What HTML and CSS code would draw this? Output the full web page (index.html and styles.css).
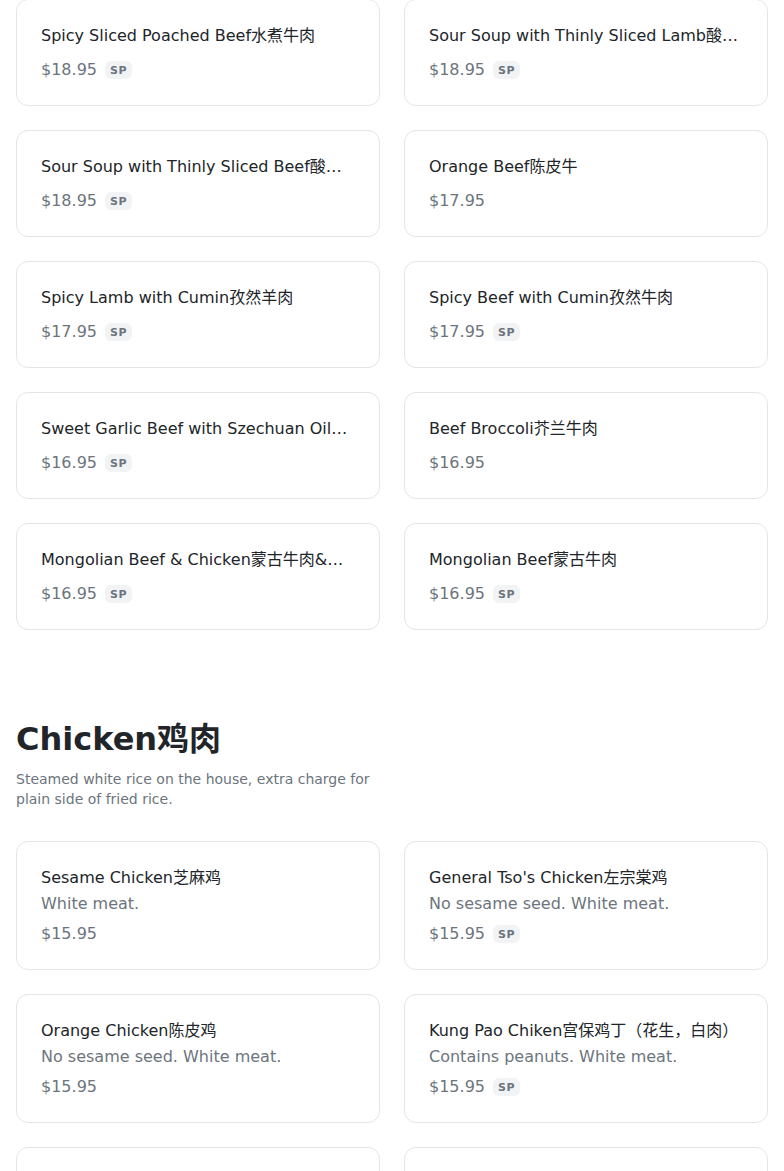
FILE: index.html
```html
<!DOCTYPE html>
<html lang="en">
<head>
<meta charset="utf-8">
<title>Menu</title>
<link rel="stylesheet" href="styles.css">
</head>
<body>
<main class="menu">
  <section class="category category-first">
    <div class="item-grid">
      <article class="item">
        <h3 class="item-name">Spicy Sliced Poached Beef水煮牛肉</h3>
        <div class="item-price-row"><span class="item-price">$18.95</span><span class="badge">SP</span></div>
      </article>
      <article class="item">
        <h3 class="item-name">Sour Soup with Thinly Sliced Lamb酸汤肥羊</h3>
        <div class="item-price-row"><span class="item-price">$18.95</span><span class="badge">SP</span></div>
      </article>
      <article class="item">
        <h3 class="item-name">Sour Soup with Thinly Sliced Beef酸汤肥牛</h3>
        <div class="item-price-row"><span class="item-price">$18.95</span><span class="badge">SP</span></div>
      </article>
      <article class="item">
        <h3 class="item-name">Orange Beef陈皮牛</h3>
        <div class="item-price-row"><span class="item-price">$17.95</span></div>
      </article>
      <article class="item">
        <h3 class="item-name">Spicy Lamb with Cumin孜然羊肉</h3>
        <div class="item-price-row"><span class="item-price">$17.95</span><span class="badge">SP</span></div>
      </article>
      <article class="item">
        <h3 class="item-name">Spicy Beef with Cumin孜然牛肉</h3>
        <div class="item-price-row"><span class="item-price">$17.95</span><span class="badge">SP</span></div>
      </article>
      <article class="item">
        <h3 class="item-name">Sweet Garlic Beef with Szechuan Oil红油蒜香牛肉</h3>
        <div class="item-price-row"><span class="item-price">$16.95</span><span class="badge">SP</span></div>
      </article>
      <article class="item">
        <h3 class="item-name">Beef Broccoli芥兰牛肉</h3>
        <div class="item-price-row"><span class="item-price">$16.95</span></div>
      </article>
      <article class="item">
        <h3 class="item-name">Mongolian Beef &amp; Chicken蒙古牛肉&amp;鸡肉</h3>
        <div class="item-price-row"><span class="item-price">$16.95</span><span class="badge">SP</span></div>
      </article>
      <article class="item">
        <h3 class="item-name">Mongolian Beef蒙古牛肉</h3>
        <div class="item-price-row"><span class="item-price">$16.95</span><span class="badge">SP</span></div>
      </article>
    </div>
  </section>

  <section class="category">
    <header class="category-header">
      <h2 class="category-title">Chicken鸡肉</h2>
      <p class="category-desc">Steamed white rice on the house, extra charge for plain side of fried rice.</p>
    </header>
    <div class="item-grid">
      <article class="item">
        <h3 class="item-name">Sesame Chicken芝麻鸡</h3>
        <p class="item-desc">White meat.</p>
        <div class="item-price-row"><span class="item-price">$15.95</span></div>
      </article>
      <article class="item">
        <h3 class="item-name">General Tso's Chicken左宗棠鸡</h3>
        <p class="item-desc">No sesame seed. White meat.</p>
        <div class="item-price-row"><span class="item-price">$15.95</span><span class="badge">SP</span></div>
      </article>
      <article class="item">
        <h3 class="item-name">Orange Chicken陈皮鸡</h3>
        <p class="item-desc">No sesame seed. White meat.</p>
        <div class="item-price-row"><span class="item-price">$15.95</span></div>
      </article>
      <article class="item">
        <h3 class="item-name">Kung Pao Chiken宫保鸡丁（花生，白肉）</h3>
        <p class="item-desc">Contains peanuts. White meat.</p>
        <div class="item-price-row"><span class="item-price">$15.95</span><span class="badge">SP</span></div>
      </article>
      <article class="item">
        <h3 class="item-name">&nbsp;</h3>
        <p class="item-desc">&nbsp;</p>
        <div class="item-price-row"><span class="item-price">&nbsp;</span></div>
      </article>
      <article class="item">
        <h3 class="item-name">&nbsp;</h3>
        <p class="item-desc">&nbsp;</p>
        <div class="item-price-row"><span class="item-price">&nbsp;</span></div>
      </article>
    </div>
  </section>
</main>
</body>
</html>
```

FILE: styles.css
```css
* {
  box-sizing: border-box;
}

html, body {
  margin: 0;
  padding: 0;
  background: #ffffff;
}

body {
  font-family: "DejaVu Sans", "Noto Sans CJK SC", sans-serif;
  color: #212529;
  font-size: 16px;
  line-height: 1.5;
}

.menu {
  padding: 0 16px;
}

.category-first {
  margin-top: -1px;
}

.category + .category {
  margin-top: 90px;
}

.category-header {
  margin-bottom: 32px;
  max-width: 364px;
}

.category-title {
  margin: 0;
  font-size: 32px;
  font-weight: 700;
  line-height: 1.2;
  color: #212529;
}

.category-desc {
  margin: 11px 0 0;
  font-size: 14px;
  line-height: 20px;
  color: #6c757d;
}

.item-grid {
  display: grid;
  grid-template-columns: 1fr 1fr;
  column-gap: 24px;
  row-gap: 24px;
}

.item {
  border: 1px solid #e3e6e9;
  border-radius: 12px;
  padding: 24px 24px 23px;
  background: #fff;
  display: flex;
  flex-direction: column;
  min-width: 0;
}

.item-name {
  margin: 0;
  font-size: 16px;
  font-weight: 400;
  line-height: 24px;
  color: #212529;
  white-space: nowrap;
  overflow: hidden;
  text-overflow: ellipsis;
}

.item-desc {
  margin: 2px 0 0;
  font-size: 16px;
  line-height: 24px;
  color: #6c757d;
}

.item-price-row {
  display: flex;
  align-items: center;
  gap: 8px;
  margin-top: 10px;
  height: 24px;
}

.item-desc + .item-price-row {
  margin-top: 6px;
}

.item-price {
  font-size: 16px;
  line-height: 24px;
  color: #6c757d;
}

.badge {
  display: inline-flex;
  align-items: center;
  justify-content: center;
  height: 18px;
  padding: 0 5px;
  border-radius: 6px;
  background: #f1f3f5;
  color: #6c757d;
  font-size: 11px;
  font-weight: 700;
  letter-spacing: 0.5px;
  line-height: 1;
}
```
